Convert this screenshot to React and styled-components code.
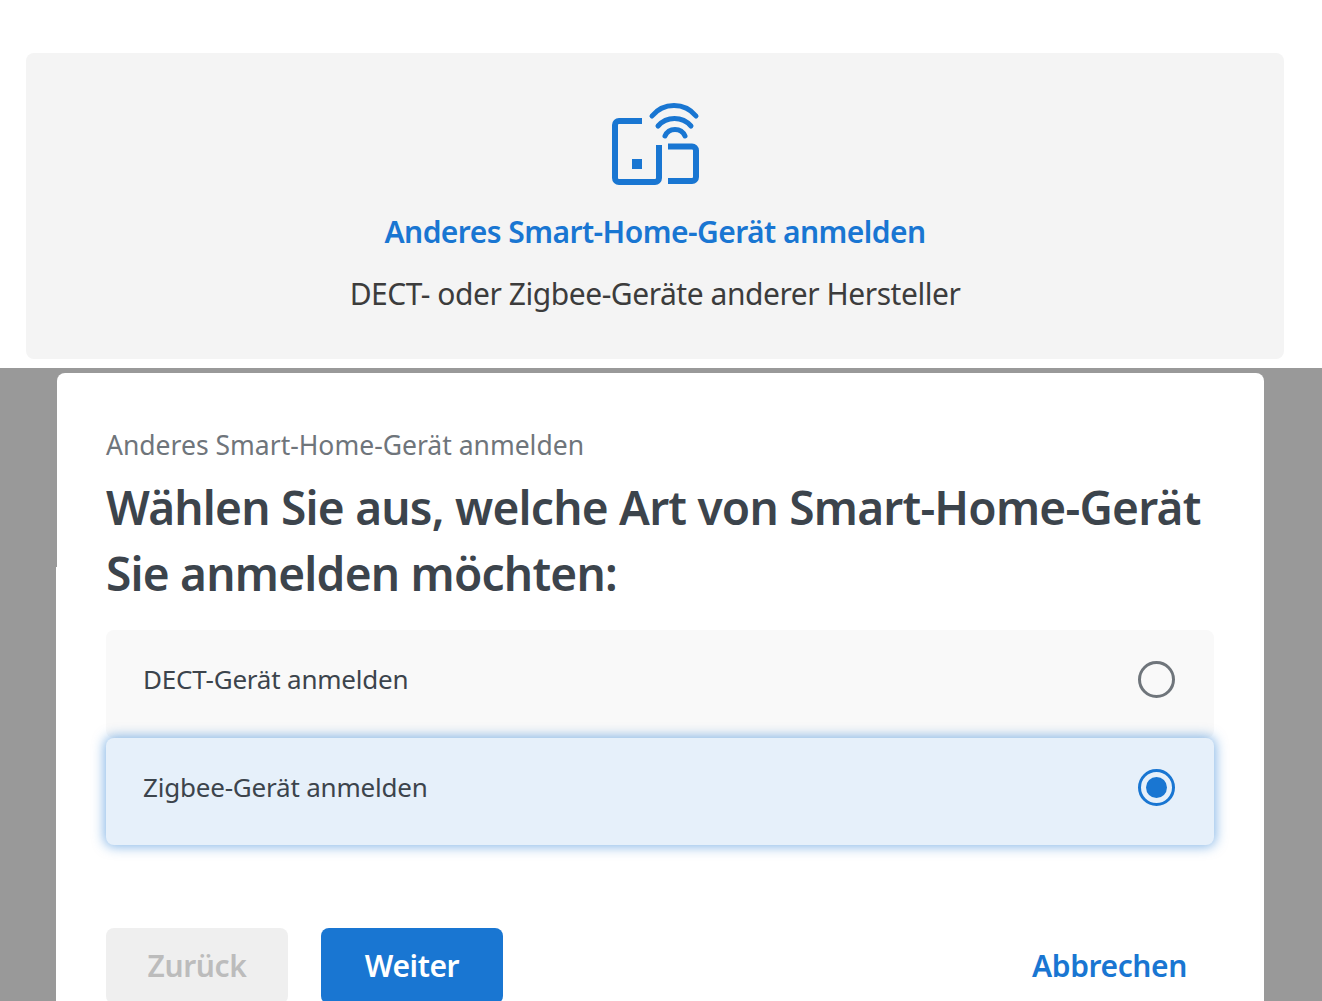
import React from 'react';
import styled, { createGlobalStyle } from 'styled-components';

const Global = createGlobalStyle`
  html, body {
    margin: 0;
    height: 1001px;
    overflow: hidden;
    background: #fff;
    font-family: "Noto Sans", "Open Sans", sans-serif;
  }
`;

const Page = styled.div`
  display: flex;
  flex-direction: column;
  height: 1001px;
  overflow: hidden;
`;

const TopArea = styled.section`
  box-sizing: border-box;
  height: 368px;
  padding: 53px 38px 9px 26px;
`;

const DeviceCard = styled.div`
  box-sizing: border-box;
  height: 306px;
  padding-top: 49px;
  background: #f4f4f4;
  border-radius: 8px;
  display: flex;
  flex-direction: column;
  align-items: center;
`;

const CardIcon = styled.svg`
  display: block;
  width: 90px;
  height: 85px;
`;

const CardTitle = styled.div`
  margin-top: 23px;
  height: 44px;
  font-size: 30px;
  line-height: 44px;
  font-weight: 600;
  letter-spacing: -0.55px;
  color: #1976d2;
`;

const CardText = styled.div`
  margin-top: 18px;
  font-size: 30px;
  line-height: 44px;
  letter-spacing: -0.46px;
  color: #3c3c3c;
`;

const Overlay = styled.section`
  flex: 1;
  min-height: 0;
  background: #999;
  padding: 5px 58px 0 57px;
`;

const Modal = styled.div`
  position: relative;
  box-sizing: border-box;
  height: 700px;
  padding: 49px 50px 0 49px;
  background: #fff;
  border-radius: 8px 8px 0 0;

  &::before {
    content: '';
    position: absolute;
    left: -1px;
    top: 194px;
    bottom: 0;
    width: 1px;
    background: #fff;
  }
`;

const Eyebrow = styled.div`
  font-size: 26.5px;
  line-height: 46px;
  color: #6f757b;
`;

const Heading = styled.h1`
  margin: 6px 0 24px;
  font-size: 46px;
  line-height: 66px;
  font-weight: 600;
  letter-spacing: -0.77px;
  color: #3c444c;
`;

const Option = styled.div`
  position: relative;
  box-sizing: border-box;
  height: ${(p) => (p.$selected ? '107px' : '108px')};
  padding: 0 39px ${(p) => (p.$selected ? '8px' : '9px')} 37px;
  display: flex;
  align-items: center;
  justify-content: space-between;
  border-radius: 8px;
  background: ${(p) => (p.$selected ? '#e6f0fa' : '#f9f9f9')};
  box-shadow: ${(p) => (p.$selected ? '0 0 12px 2px rgba(25, 118, 210, 0.5)' : 'none')};
  font-size: 26px;
  letter-spacing: -0.2px;
  color: #3c444c;
`;

const OptionLabel = styled.span`
  padding-bottom: 1px;
`;

const Radio = styled.span`
  box-sizing: border-box;
  width: 37px;
  height: 37px;
  border-radius: 50%;
  border: 3px solid ${(p) => (p.$checked ? '#1976d2' : '#6f757b')};
  display: flex;
  align-items: center;
  justify-content: center;

  &::after {
    content: '';
    display: ${(p) => (p.$checked ? 'block' : 'none')};
    width: 21px;
    height: 21px;
    border-radius: 50%;
    background: #1976d2;
  }
`;

const Actions = styled.div`
  margin-top: 83px;
  display: flex;
  align-items: flex-start;
  gap: 33px;
`;

const Button = styled.button`
  box-sizing: border-box;
  width: 182px;
  height: 76px;
  border: 0;
  border-radius: 8px;
  padding: 0 0 2px;
  font-family: inherit;
  font-size: 30px;
  font-weight: 600;
  letter-spacing: -0.4px;
  background: ${(p) => (p.$primary ? '#1976d2' : '#efefef')};
  color: ${(p) => (p.$primary ? '#fff' : '#bcbcbc')};
`;

const TextButton = styled.button`
  margin-left: auto;
  margin-right: 27px;
  height: 76px;
  border: 0;
  padding: 0 0 2px;
  background: none;
  font-family: inherit;
  font-size: 30px;
  font-weight: 600;
  letter-spacing: -0.4px;
  color: #1976d2;
`;

const DeviceIcon = () => (
  <CardIcon viewBox="-1 0 90 85" fill="none" stroke="#1976d2">
    <g strokeWidth="6">
      <path d="M31 19H8a4 4 0 0 0-4 4V76a4 4 0 0 0 4 4H44a4 4 0 0 0 4-4V43" />
      <path d="M57 44.5H81a4 4 0 0 1 4 4V75a4 4 0 0 1-4 4H57" />
    </g>
    <rect x="21" y="57" width="10" height="10" fill="#1976d2" stroke="none" />
    <g strokeWidth="5" strokeLinecap="round">
      <path d="M41 14A28.3 28.3 0 0 1 85 14" />
      <path d="M47 24A21.9 21.9 0 0 1 80 24" />
      <path d="M54 34A10.9 10.9 0 0 1 74 34" />
    </g>
  </CardIcon>
);

export default function App() {
  return (
    <Page>
      <Global />
      <TopArea>
        <DeviceCard>
          <DeviceIcon />
          <CardTitle>Anderes Smart-Home-Gerät anmelden</CardTitle>
          <CardText>DECT- oder Zigbee-Geräte anderer Hersteller</CardText>
        </DeviceCard>
      </TopArea>
      <Overlay>
        <Modal>
          <Eyebrow>Anderes Smart-Home-Gerät anmelden</Eyebrow>
          <Heading>Wählen Sie aus, welche Art von Smart-Home-Gerät Sie anmelden möchten:</Heading>
          <Option>
            <OptionLabel>DECT-Gerät anmelden</OptionLabel>
            <Radio />
          </Option>
          <Option $selected>
            <OptionLabel>Zigbee-Gerät anmelden</OptionLabel>
            <Radio $checked />
          </Option>
          <Actions>
            <Button disabled>Zurück</Button>
            <Button $primary>Weiter</Button>
            <TextButton>Abbrechen</TextButton>
          </Actions>
        </Modal>
      </Overlay>
    </Page>
  );
}
